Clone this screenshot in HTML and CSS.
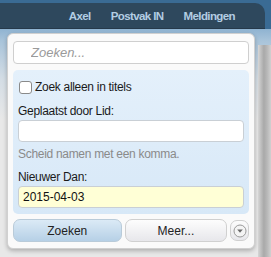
FILE: index.html
```html
<!DOCTYPE html>
<html lang="nl">
<head>
    <meta charset="UTF-8">
    <title>Zoeken</title>
    <link rel="stylesheet" href="styles.css">
</head>
<body>
    <div class="header">
        <div class="navbar">
            <a href="#">Axel</a>
            <a href="#">Postvak IN</a>
            <a href="#">Meldingen</a>
        </div>
    </div>

    <div class="content">
        <div class="side-left"></div>
        <div class="search-menu">
            <input type="text" class="search-box" placeholder="Zoeken...">

            <div class="search-options">
                <label class="check-row">
                    <span class="checkbox"></span>
                    Zoek alleen in titels
                </label>

                <label class="field-label">Geplaatst door Lid:</label>
                <input type="text" class="field">
                <p class="hint">Scheid namen met een komma.</p>

                <label class="field-label">Nieuwer Dan:</label>
                <input type="text" class="field field-date" value="2015-04-03">
            </div>

            <div class="button-row">
                <button class="btn btn-primary">Zoeken</button>
                <button class="btn">Meer...</button>
                <button class="btn-round">
                    <svg width="14" height="14" viewBox="0 0 14 14">
                        <circle cx="7" cy="7" r="6" fill="#f4f4f4" stroke="#9a9a9a" stroke-width="1"/>
                        <path d="M4.2 5.6 L9.8 5.6 L7 8.8 Z" fill="#6a6a6a"/>
                    </svg>
                </button>
            </div>
        </div>
        <div class="side-right"></div>
    </div>
</body>
</html>
```

FILE: styles.css
```css
body {
    margin: 0;
    font-family: "Liberation Sans", Arial, sans-serif;
    background: #e9e9e9;
    width: 271px;
    height: 257px;
    overflow: hidden;
}
.header {
    background: #3a6b94;
    padding-top: 3px;
}
.navbar {
    height: 25px;
    background: #2e485d;
    border-top-right-radius: 10px;
    margin-right: 6px;
    display: flex;
    justify-content: flex-end;
    align-items: center;
    gap: 20px;
    padding-right: 30px;
    border-bottom: 1px solid #26394a;
}
.navbar a {
    color: #b3cde3;
    font-weight: bold;
    font-size: 11.5px;
    letter-spacing: -0.6px;
    text-decoration: none;
}
.content {
    display: flex;
    height: 228px;
    background: linear-gradient(to bottom, #8fb3d1, #a9c4da 12px, #d4dde5 50px, #e8e8e8 90px);
}
.side-left {
    width: 7px;
    flex: none;
}
.side-right {
    flex: 1;
    margin-top: 16px;
    margin-left: 3px;
    background: linear-gradient(to right, #d6d6d6, #a9a9a9 45%, #b8b8b8 70%, #d0d0d0);
}
.search-menu {
    width: 236px;
    margin-top: 4px;
    align-self: flex-start;
    padding: 7px 5px 6px 5px;
    background: #fafafa;
    border: 1px solid #d0d0d0;
    border-radius: 6px;
    box-shadow: 0 2px 4px rgba(0, 0, 0, 0.25);
}
.search-box {
    display: block;
    box-sizing: border-box;
    width: 100%;
    height: 23px;
    margin: 0 0 6px 0;
    padding: 0 0 0 17px;
    border: 1px solid #cfcfcf;
    border-radius: 4px;
    background: #fff;
    font-family: inherit;
    font-size: 13px;
    font-style: italic;
}
.search-box::placeholder {
    color: #9a9a9a;
}
.search-options {
    background: linear-gradient(to bottom, #e4f0fb, #d7e8f7);
    border-radius: 5px;
    padding: 10px 5px 6px 5px;
    font-size: 12px;
    line-height: 14px;
    letter-spacing: -0.3px;
    color: #1a1a1a;
}
.check-row {
    display: flex;
    align-items: center;
    gap: 3px;
    margin-left: 1px;
    margin-bottom: 10px;
}
.checkbox {
    width: 11px;
    height: 11px;
    border: 1px solid #8a8a8a;
    border-radius: 3px;
    background: #fff;
}
.field-label {
    display: block;
    margin-bottom: 2px;
}
.field {
    display: block;
    box-sizing: border-box;
    width: 100%;
    height: 22px;
    margin: 0;
    padding: 0 4px;
    border: 1px solid #c9cfd5;
    border-radius: 4px;
    background: #fff;
    font-family: inherit;
    font-size: 12px;
    color: #111;
}
.field-date {
    background: #ffffd6;
}
.hint {
    margin: 5px 0 9px 0;
    color: #8a8a8a;
}
.button-row {
    display: flex;
    align-items: center;
    gap: 3px;
    margin-top: 5px;
}
.btn {
    height: 23px;
    width: 104px;
    border: 1px solid #d0d0d0;
    border-radius: 7px;
    background: linear-gradient(to bottom, #fdfdfd, #e7e7eb);
    font-family: inherit;
    font-size: 12px;
    color: #222;
}
.btn-primary {
    width: 110px;
    border-color: #b9cbd9;
    background: linear-gradient(to bottom, #dbeaf6, #b6d0e6);
}
.btn-round {
    width: 19px;
    height: 21px;
    padding: 0;
    border: 1px solid #d0d0d0;
    border-radius: 7px;
    background: linear-gradient(to bottom, #fdfdfd, #e7e7eb);
    display: flex;
    align-items: center;
    justify-content: center;
}
```
